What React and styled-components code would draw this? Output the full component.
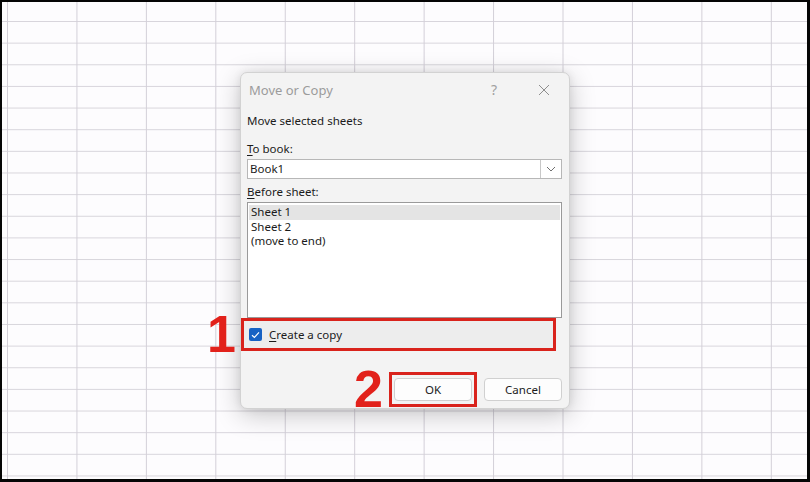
import React from 'react';
import styled, {createGlobalStyle} from 'styled-components';

const GlobalStyle = createGlobalStyle`
  html, body {
    margin: 0;
    padding: 0;
    background: #000;
  }
  * {
    box-sizing: border-box;
  }
`;

const Frame = styled.div`
  width: 810px;
  height: 482px;
  border-style: solid;
  border-color: #050505;
  border-width: 2px 3px 3px 2px;
  overflow: hidden;
`;

const Sheet = styled.div`
  width: 100%;
  height: 100%;
  background-color: #fdfcfe;
  background-image: linear-gradient(to right, #d3cfd8 1px, transparent 1px),
    linear-gradient(to bottom, #d8d5dc 1px, transparent 1px);
  background-size: 69.45px 100%, 100% 21.65px;
  background-position: 5px 0, 0 19px;
  display: flex;
  align-items: center;
  justify-content: center;
  font-family: 'Noto Sans', 'Open Sans', sans-serif;
`;

const Dialog = styled.div`
  width: 330px;
  height: 337px;
  margin-left: 1px;
  background: #f3f3f3;
  border: 1px solid #d2d2d2;
  border-radius: 7px;
  box-shadow: 0 6px 26px rgba(0, 0, 0, 0.22), 0 0 8px rgba(0, 0, 0, 0.08);
  display: flex;
  flex-direction: column;
`;

const TitleBar = styled.div`
  height: 33px;
  display: flex;
  align-items: center;
  padding: 0 0 0 8px;
  color: #9b9b9b;
  font-size: 13px;
`;

const Title = styled.div`
  flex: 1;
`;

const TitleButton = styled.div`
  width: 50px;
  display: flex;
  align-items: center;
  justify-content: center;
  font-size: 14px;
  color: #a0a0a0;
`;

const Body = styled.div`
  display: flex;
  flex-direction: column;
  padding: 7px 7px 0 6px;
`;

const Text = styled.div`
  font-size: 11.5px;
  line-height: 16px;
  color: #1b1b1b;
  margin-top: ${({top}) => top || 0}px;
`;

const Key = styled.span`
  text-decoration: underline;
  text-underline-offset: 2px;
`;

const Combo = styled.div`
  margin-top: 2px;
  height: 20px;
  background: #fff;
  border: 1px solid #b7b7b7;
  display: flex;
  align-items: stretch;
`;

const ComboValue = styled.div`
  flex: 1;
  font-size: 11.5px;
  line-height: 18px;
  padding-left: 2px;
  color: #1b1b1b;
`;

const ComboArrow = styled.div`
  width: 21px;
  border-left: 1px solid #c8c8c8;
  display: flex;
  align-items: center;
  justify-content: center;
`;

const List = styled.div`
  margin-top: 2px;
  height: 116px;
  background: #fff;
  border: 1px solid #9a9a9a;
  padding: 2px 1px;
`;

const ListItem = styled.div`
  font-size: 11.5px;
  line-height: 14.5px;
  padding-left: 2px;
  color: #1b1b1b;
  background: ${({selected}) => (selected ? '#e4e4e4' : 'transparent')};
`;

const CheckRow = styled.div`
  position: relative;
  height: 33px;
  margin: 0 13px 0 0;
  border: 3px solid #d9231c;
  display: flex;
  align-items: center;
  gap: 7px;
  padding-left: 5px;
  background: #ededed;
`;

const Box = styled.div`
  width: 13px;
  height: 13px;
  border-radius: 2px;
  background: #1762c4;
  display: flex;
  align-items: center;
  justify-content: center;
`;

const Marker = styled.div`
  position: absolute;
  right: calc(100% + ${({gap}) => gap}px);
  top: 50%;
  transform: translateY(-52%);
  font-family: 'Liberation Sans', Arial, sans-serif;
  font-weight: 700;
  font-size: 52px;
  line-height: 1;
  color: #e2211b;
`;

const Footer = styled.div`
  margin-top: auto;
  display: flex;
  justify-content: flex-end;
  align-items: center;
  gap: 7px;
  padding: 0 7px 1px 0;
`;

const Highlight = styled.div`
  position: relative;
  border: 3px solid #d9231c;
  padding: 3px 2px;
`;

const Button = styled.div`
  width: 78px;
  height: 23px;
  background: #fdfdfd;
  border: 1px solid #d0d0d0;
  border-radius: 4px;
  font-size: 11.5px;
  line-height: 21px;
  text-align: center;
  color: #1b1b1b;
`;

const App = () => {
  const sheets = ['Sheet 1', 'Sheet 2', '(move to end)'];
  return (
    <>
      <GlobalStyle />
      <Frame>
        <Sheet>
          <Dialog>
            <TitleBar>
              <Title>Move or Copy</Title>
              <TitleButton>?</TitleButton>
              <TitleButton>
                <svg width="12" height="12" viewBox="0 0 12 12">
                  <path d="M1 1 L11 11 M11 1 L1 11" fill="none" stroke="#8e8e8e" strokeWidth="1" />
                </svg>
              </TitleButton>
            </TitleBar>
            <Body>
              <Text>Move selected sheets</Text>
              <Text top={12}>
                <Key>T</Key>o book:
              </Text>
              <Combo>
                <ComboValue>Book1</ComboValue>
                <ComboArrow>
                  <svg width="10" height="6" viewBox="0 0 10 6">
                    <path d="M1 1 L5 5 L9 1" fill="none" stroke="#707070" strokeWidth="1" />
                  </svg>
                </ComboArrow>
              </Combo>
              <Text top={5}>
                <Key>B</Key>efore sheet:
              </Text>
              <List>
                {sheets.map((name, index) => (
                  <ListItem key={index} selected={index === 0}>
                    {name}
                  </ListItem>
                ))}
              </List>
            </Body>
            <CheckRow>
              <Marker gap={8}>1</Marker>
              <Box>
                <svg width="9" height="8" viewBox="0 0 9 8">
                  <path d="M1 4.2 L3.4 6.4 L8 1.4" fill="none" stroke="#fff" strokeWidth="1.2" />
                </svg>
              </Box>
              <Text>
                <Key>C</Key>reate a copy
              </Text>
            </CheckRow>
            <Footer>
              <Highlight>
                <Marker gap={9}>2</Marker>
                <Button>OK</Button>
              </Highlight>
              <Button>Cancel</Button>
            </Footer>
          </Dialog>
        </Sheet>
      </Frame>
    </>
  );
};

export default App;
